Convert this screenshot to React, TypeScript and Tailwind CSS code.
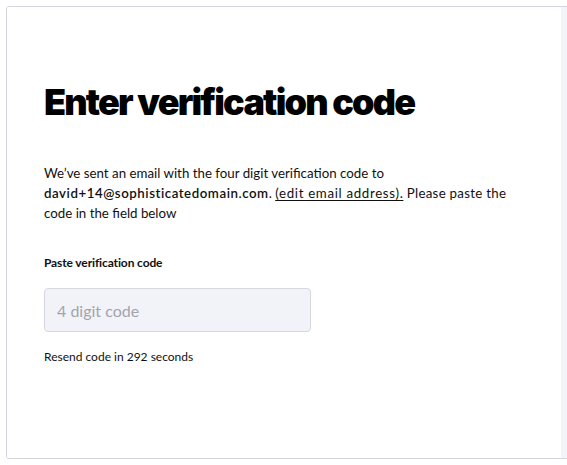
import React from 'react';

const App: React.FC = () => {
  return (
    <div className="w-[567px] h-[465px] overflow-hidden bg-white" style={{ fontFamily: 'Lato, "Noto Sans", sans-serif' }}>
      <div className="ml-[6px] mt-[6px] w-[620px] h-[453px] flex border border-[#d4d4de] rounded-tl-[3px] rounded-bl-[3px] overflow-hidden">
        <div className="w-[554px] shrink-0 bg-white pl-[37px] pt-[73px]">
          <h1
            className="text-[36px] leading-[44px] font-black tracking-[-0.05em] text-black"
            style={{ fontFamily: 'Inter, sans-serif' }}
          >
            Enter verification code
          </h1>
          <p className="mt-[39px] w-[472px] text-[13.3px] leading-[20px] text-[#111]">
            We’ve sent an email with the four digit verification code to{' '}
            <span className="font-semibold tracking-[0.04em]">david+14@sophisticatedomain.com</span>.{' '}
            <a href="#" className="underline underline-offset-2 tracking-[0.05em]">(edit email address).</a>{' '}
            <span className="tracking-[0.02em]">Please paste the</span> code in the field below
          </p>
          <label className="block mt-[32px] text-[12px] leading-[16px] font-bold text-[#111] tracking-[-0.01em]">
            Paste verification code
          </label>
          <input
            type="text"
            placeholder="4 digit code"
            className="mt-[17px] block w-[267px] h-[44px] px-[12px] rounded-[4px] border border-[#d6d7df] bg-[#f2f3f8] text-[16px] text-[#111] placeholder:text-[#a3a3ad] outline-none"
          />
          <p className="mt-[17px] text-[12px] leading-[16px] text-[#111]">Resend code in 292 seconds</p>
        </div>
        <div className="flex-1 bg-[#f3f4f9]" />
      </div>
    </div>
  );
};

export default App;
